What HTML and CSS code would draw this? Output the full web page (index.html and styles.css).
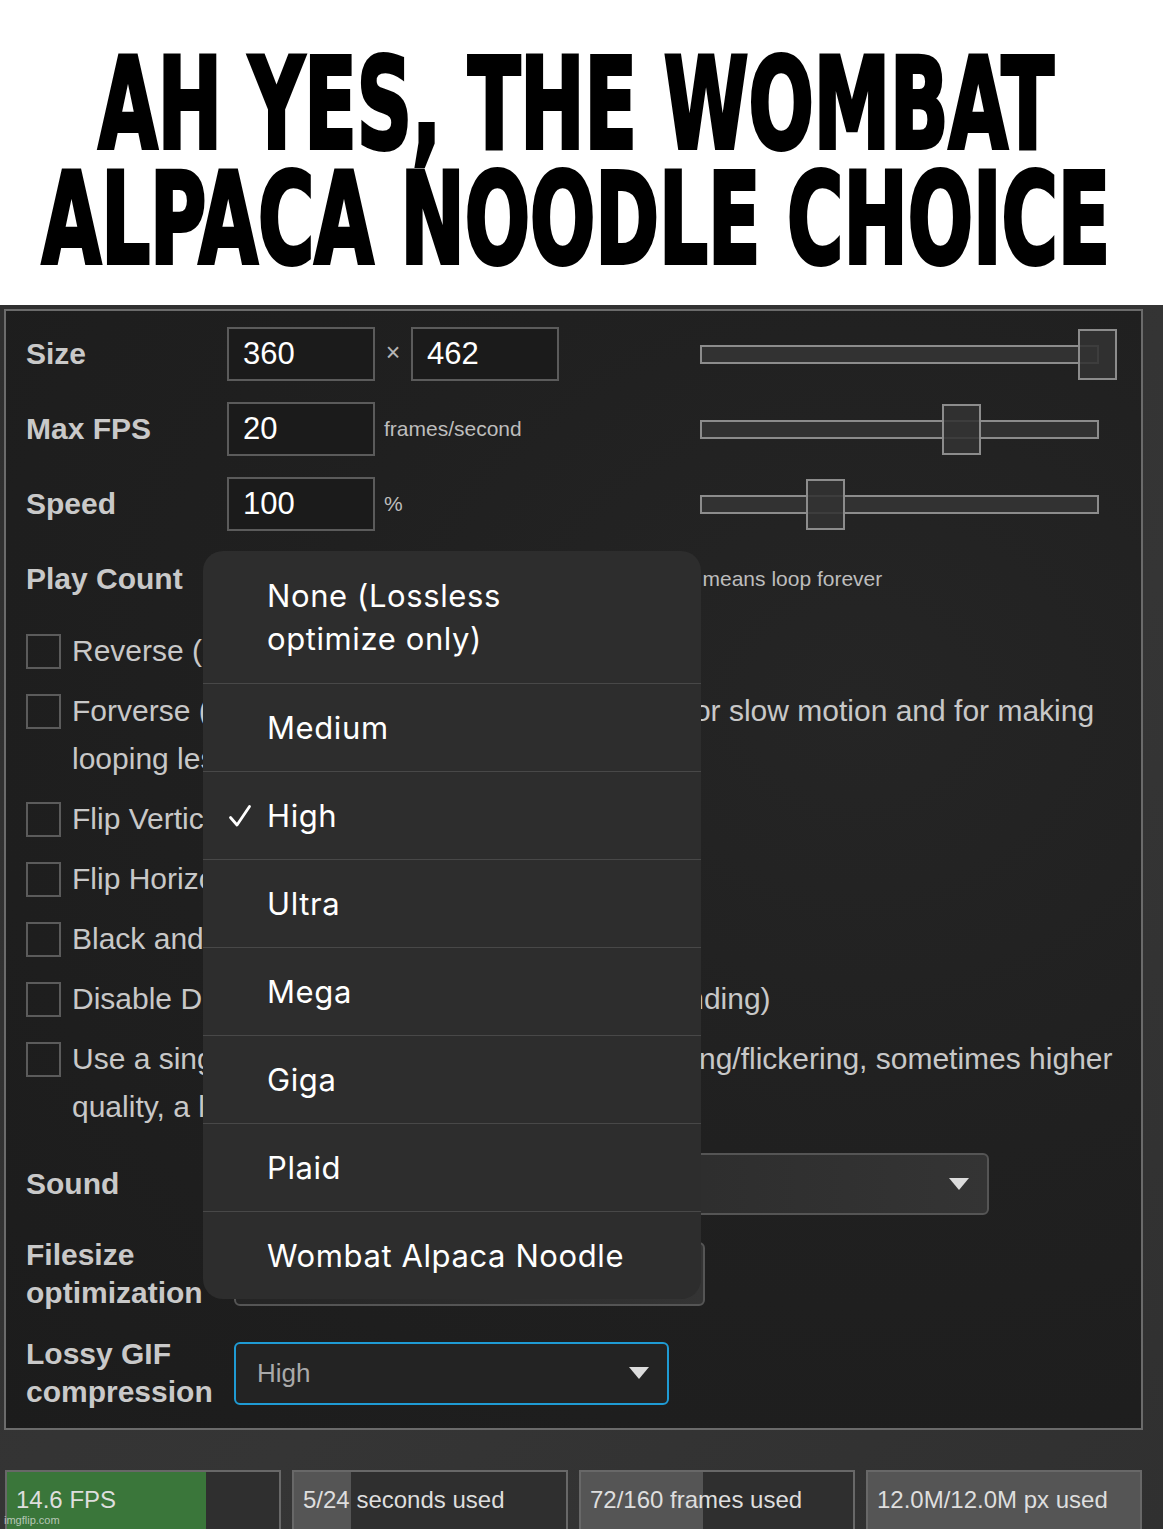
FILE: index.html
```html
<!DOCTYPE html>
<html lang="en">
<head>
<meta charset="utf-8">
<title>Wombat Alpaca Noodle</title>
<link rel="stylesheet" href="styles.css">
</head>
<body>
<header class="meme">
  <h1 class="meme-title"><span class="meme-line">AH YES, THE WOMBAT</span><span class="meme-line">ALPACA NOODLE CHOICE</span></h1>
</header>
<main class="app">
  <section class="panel">
    <div class="field-row">
      <div class="label">Size</div>
      <div class="mid">
        <input class="num" type="text" value="360">
        <span class="times">×</span>
        <input class="num" type="text" value="462">
      </div>
      <div class="slider"><div class="thumb" style="left:376px"></div></div>
    </div>
    <div class="field-row">
      <div class="label">Max FPS</div>
      <div class="mid">
        <input class="num" type="text" value="20">
        <span class="hint">frames/second</span>
      </div>
      <div class="slider"><div class="thumb" style="left:240px"></div></div>
    </div>
    <div class="field-row">
      <div class="label">Speed</div>
      <div class="mid">
        <input class="num" type="text" value="100">
        <span class="hint">%</span>
      </div>
      <div class="slider"><div class="thumb" style="left:104px"></div></div>
    </div>
    <div class="field-row">
      <div class="label">Play Count</div>
      <div class="mid">
        <input class="num" type="text" value="">
        <span class="hint">times,</span>
      </div>
      <div class="hint hint-loop">0 means loop forever</div>
    </div>

    <div class="checks">
      <div class="check-row"><span class="checkbox"></span><span class="check-text">Reverse (play backwards)</span></div>
      <div class="check-row"><span class="checkbox"></span><span class="check-text">Forverse (play forwards then backwards, nice for slow motion and for making looping less jumpy)</span></div>
      <div class="check-row"><span class="checkbox"></span><span class="check-text">Flip Vertically</span></div>
      <div class="check-row"><span class="checkbox"></span><span class="check-text">Flip Horizontally</span></div>
      <div class="check-row"><span class="checkbox"></span><span class="check-text">Black and White</span></div>
      <div class="check-row"><span class="checkbox"></span><span class="check-text">Disable Dithering (faster, smaller GIF, more banding)</span></div>
      <div class="check-row"><span class="checkbox"></span><span class="check-text">Use a single color table for all frames (no banding/flickering, sometimes higher quality, a little slower)</span></div>
    </div>

    <div class="select-row">
      <div class="label">Sound</div>
      <div class="select select-sound"><span class="select-value">No sound</span><span class="arrow"></span></div>
    </div>
    <div class="select-row select-row-tall">
      <div class="label label-two">Filesize<br>optimization</div>
      <div class="select select-file"><span class="select-value">Lossless</span><span class="arrow"></span></div>
    </div>
    <div class="select-row select-row-tall">
      <div class="label label-two">Lossy GIF<br>compression</div>
      <div class="select select-lossy"><span class="select-value">High</span><span class="arrow"></span></div>
    </div>

    <div class="menu">
      <div class="menu-item menu-item-first"><span class="check-slot"></span><span class="menu-text">None (Lossless<br>optimize only)</span></div>
      <div class="menu-item"><span class="check-slot"></span><span class="menu-text">Medium</span></div>
      <div class="menu-item"><span class="check-slot"><svg class="tick" width="24" height="24" viewBox="0 0 24 24"><path d="M2.5 13.5 L9 21 L21.5 2.5" fill="none" stroke="#ffffff" stroke-width="2.8" stroke-linecap="round" stroke-linejoin="round"/></svg></span><span class="menu-text">High</span></div>
      <div class="menu-item"><span class="check-slot"></span><span class="menu-text">Ultra</span></div>
      <div class="menu-item"><span class="check-slot"></span><span class="menu-text">Mega</span></div>
      <div class="menu-item"><span class="check-slot"></span><span class="menu-text">Giga</span></div>
      <div class="menu-item"><span class="check-slot"></span><span class="menu-text">Plaid</span></div>
      <div class="menu-item"><span class="check-slot"></span><span class="menu-text">Wombat Alpaca Noodle</span></div>
    </div>
  </section>

  <section class="status">
    <div class="stat"><div class="fill fill-green" style="width:73%"></div><span class="stat-text">14.6 FPS</span></div>
    <div class="stat"><div class="fill" style="width:20.8%"></div><span class="stat-text">5/24 seconds used</span></div>
    <div class="stat"><div class="fill" style="width:45%"></div><span class="stat-text">72/160 frames used</span></div>
    <div class="stat"><div class="fill" style="width:100%"></div><span class="stat-text">12.0M/12.0M px used</span></div>
    <span class="watermark">imgflip.com</span>
  </section>
</main>
</body>
</html>
```
FILE: styles.css
```css
* { box-sizing: border-box; }

html, body {
  margin: 0;
  padding: 0;
  background: #ffffff;
}

body {
  font-family: "Liberation Sans", Arial, sans-serif;
  overflow: hidden;
}

/* ---------- meme caption ---------- */
.meme {
  height: 305px;
  padding: 47px 11px 0 0;
  background: #ffffff;
  display: flex;
  justify-content: center;
  align-items: flex-start;
  overflow: hidden;
}

.meme-title {
  flex: none;
  margin: 0;
  font-family: "DejaVu Sans Condensed", "Liberation Sans Narrow", "Liberation Sans", sans-serif;
  font-weight: 700;
  font-size: 127px;
  line-height: 115px;
  color: #000;
  text-align: center;
  -webkit-text-stroke: 4px #000;
  transform: scaleX(0.672);
  transform-origin: center top;
  white-space: nowrap;
}

.meme-line { display: block; }

/* ---------- app ---------- */
.app {
  background: linear-gradient(135deg, #2f2f2f 0%, #353535 60%, #303030 100%);
  padding: 4px 20px 0 4px;
  height: 1224px;
}

.panel {
  position: relative;
  border: 2px solid #6b6b6b;
  background: radial-gradient(ellipse at 75% 35%, #252525 0%, #202020 45%, #1c1c1c 100%);
  padding: 16px 20px 17px 20px;
}

.label {
  color: #c9c9c9;
  font-weight: 700;
  font-size: 30px;
  line-height: 38px;
}

.field-row {
  display: grid;
  grid-template-columns: 201px 473px 399px;
  align-items: center;
  height: 54px;
  margin-bottom: 21px;
}

.mid {
  display: flex;
  align-items: center;
  height: 54px;
}

.num {
  width: 148px;
  height: 54px;
  margin: 0;
  padding: 0 0 0 14px;
  border: 2px solid #5b5b5b;
  border-radius: 0;
  background: #1b1b1b;
  color: #ffffff;
  font-family: "Liberation Sans", Arial, sans-serif;
  font-size: 31px;
  outline: none;
}

.times {
  width: 36px;
  text-align: center;
  color: #b5b5b5;
  font-size: 25px;
  padding-bottom: 4px;
}

.hint {
  color: #bdbdbd;
  font-size: 21px;
  margin-left: 9px;
}

.hint-loop {
  margin-left: -15px;
  white-space: nowrap;
}

.slider {
  position: relative;
  width: 399px;
  height: 19px;
  border: 2px solid #8c8c8c;
  background: #323232;
}

.thumb {
  position: absolute;
  top: -18px;
  width: 39px;
  height: 51px;
  border: 2px solid #8c8c8c;
  background: rgba(50, 50, 50, 0.88);
}

/* ---------- checkboxes ---------- */
.checks {
  display: flex;
  flex-direction: column;
  gap: 12px;
  margin-top: 0;
}

.check-row {
  display: flex;
  align-items: flex-start;
}

.checkbox {
  flex: none;
  width: 35px;
  height: 35px;
  margin-top: 7px;
  border: 2px solid #5b5b5b;
  background: transparent;
}

.check-text {
  margin-left: 11px;
  color: #c8c8c8;
  font-size: 30px;
  line-height: 48px;
}

/* ---------- selects ---------- */
.select-row {
  display: flex;
  align-items: center;
  margin-top: 22px;
  min-height: 62px;
}

.select-row-tall {
  margin-top: 21px;
  min-height: 76px;
}

.select-row-tall + .select-row-tall { margin-top: 23px; }

.select-row .label { width: 208px; flex: none; }

.select {
  position: relative;
  display: flex;
  align-items: center;
  justify-content: space-between;
  padding: 0 18px 0 21px;
  border: 2px solid #555;
  border-radius: 6px;
  background: linear-gradient(90deg, #242424 0%, #2c2c2c 50%, #343434 100%);
}

.select-value {
  color: #a9a9a9;
  font-size: 26px;
}

.arrow {
  width: 0;
  height: 0;
  border-left: 10px solid transparent;
  border-right: 10px solid transparent;
  border-top: 12px solid #dcdcdc;
}

.select-sound { width: 755px; height: 62px; }
.select-file { width: 471px; height: 64px; }
.select-lossy {
  width: 435px;
  height: 63px;
  border-color: #1f9bd4;
  background: #232323;
}

/* ---------- popup menu ---------- */
.menu {
  position: absolute;
  left: 197px;
  top: 240px;
  width: 498px;
  border-radius: 20px;
  background: #2d2d2d;
  overflow: hidden;
  z-index: 5;
  font-family: Inter, "Noto Sans", sans-serif;
}

.menu-item {
  display: flex;
  align-items: center;
  height: 88px;
  border-top: 1.5px solid #484848;
  color: #ffffff;
  font-size: 31px;
  letter-spacing: 0.6px;
}

.menu-item-first {
  height: 132px;
  border-top: none;
}

.menu-text { line-height: 43px; }

.check-slot {
  flex: none;
  width: 64px;
  display: flex;
  align-items: center;
  padding-left: 25px;
}

/* ---------- status bars ---------- */
.status {
  position: relative;
  display: flex;
  gap: 11px;
  margin: 40px 0 0 1px;
}

.stat {
  position: relative;
  width: 276px;
  height: 72px;
  border: 2px solid #686868;
  background: #2f2f2f;
  padding: 14px 0 0 9px;
}

.fill {
  position: absolute;
  left: 0;
  top: 0;
  bottom: 0;
  background: #555555;
}

.fill-green { background: #3a763a; }

.stat-text {
  position: relative;
  color: #dedede;
  font-size: 24px;
  line-height: 28px;
  white-space: nowrap;
}

.watermark {
  position: absolute;
  left: -1px;
  top: 44px;
  color: rgba(235, 235, 235, 0.7);
  font-size: 11px;
  font-family: "Liberation Sans", Arial, sans-serif;
}
```
